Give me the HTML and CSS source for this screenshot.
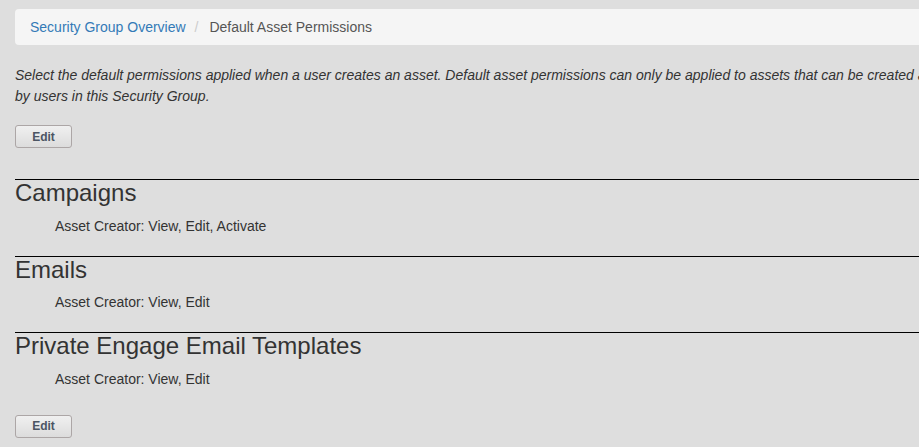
FILE: index.html
```html
<!DOCTYPE html>
<html>
<head>
<meta charset="utf-8">
<title>Default Asset Permissions</title>
<link rel="stylesheet" href="styles.css">
</head>
<body>
<div class="page">
  <ol class="breadcrumb">
    <li class="crumb"><a class="crumb-link" href="#">Security Group Overview</a></li>
    <li class="crumb crumb-active">Default Asset Permissions</li>
  </ol>
  <p class="intro">Select the default permissions applied when a user creates an asset. Default asset permissions can only be applied to assets that can be created and edited by users in this Security Group.</p>
  <button class="btn" type="button">Edit</button>
  <div class="sections">
    <section class="asset">
      <h3 class="asset-title">Campaigns</h3>
      <p class="asset-perm">Asset Creator: View, Edit, Activate</p>
    </section>
    <section class="asset">
      <h3 class="asset-title">Emails</h3>
      <p class="asset-perm">Asset Creator: View, Edit</p>
    </section>
    <section class="asset">
      <h3 class="asset-title">Private Engage Email Templates</h3>
      <p class="asset-perm">Asset Creator: View, Edit</p>
    </section>
  </div>
  <button class="btn btn-bottom" type="button">Edit</button>
</div>
</body>
</html>
```
FILE: styles.css
```css
html, body {
  margin: 0;
  padding: 0;
  overflow: hidden;
  background: #dedede;
}
body {
  font-family: "Liberation Sans", Arial, sans-serif;
  color: #333;
  font-size: 14px;
}
.page {
  width: 985px;
  padding: 9px 0 0 15px;
}
.breadcrumb {
  list-style: none;
  margin: 0;
  padding: 8px 15px;
  background: #f5f5f5;
  border-radius: 4px;
  display: flex;
  line-height: 20px;
  font-size: 14px;
}
.crumb + .crumb::before {
  content: "/\00a0";
  padding: 0 7px 0 9px;
  color: #ccc;
}
.crumb-link {
  color: #337ab7;
  text-decoration: none;
}
.crumb-active {
  color: #555;
}
.intro {
  margin: 20px 0 18px;
  font-style: italic;
  font-size: 14px;
  line-height: 21px;
  color: #333;
}
.btn {
  display: block;
  width: 57px;
  height: 23px;
  padding: 0;
  font-family: "Liberation Sans", Arial, sans-serif;
  font-size: 12px;
  font-weight: bold;
  color: #4c5563;
  background: linear-gradient(#f0f0f0, #dcdcdc);
  border: 1px solid #aca6a6;
  border-radius: 3px;
}
.sections {
  margin-top: 31px;
}
.asset {
  border-top: 1px solid #000;
}
.asset-title {
  margin: 0;
  font-size: 24px;
  font-weight: normal;
  line-height: 25.5px;
  color: #333;
}
.asset-perm {
  margin: 10px 0 20px 40px;
  line-height: 20px;
  font-size: 14px;
}
.btn-bottom {
  margin-top: 26px;
}
```
